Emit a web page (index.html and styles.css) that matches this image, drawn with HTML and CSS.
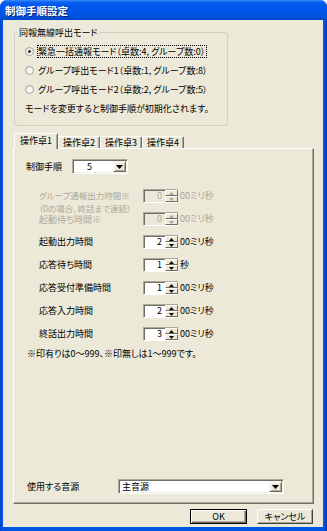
FILE: index.html
```html
<!DOCTYPE html>
<html lang="ja">

<head>
    <meta charset="UTF-8">
    <title>制御手順設定</title>
    <link rel="stylesheet" href="styles.css">
</head>

<body>
    <div class="window">
        <div class="titlebar">
            <span class="title">制御手順設定</span>
        </div>

        <div class="client">
            <!-- mode group -->
            <fieldset class="group">
                <legend>同報無線呼出モード</legend>
                <div class="radio-row first">
                    <span class="radio checked"></span>
                    <span class="radio-text focus">緊急一括通報モード（卓数:4, グループ数:0）</span>
                </div>
                <div class="radio-row">
                    <span class="radio"></span>
                    <span class="radio-text">グループ呼出モード1（卓数:1, グループ数:8）</span>
                </div>
                <div class="radio-row">
                    <span class="radio"></span>
                    <span class="radio-text">グループ呼出モード2（卓数:2, グループ数:5）</span>
                </div>
                <p class="group-note">モードを変更すると制御手順が初期化されます。</p>
            </fieldset>

            <!-- tabs -->
            <div class="tabs">
                <div class="tab active">操作卓1</div>
                <div class="tab">操作卓2</div>
                <div class="tab">操作卓3</div>
                <div class="tab">操作卓4</div>
            </div>

            <div class="tab-panel">
                <div class="proc-row">
                    <span class="proc-label">制御手順</span>
                    <div class="combo combo-small">
                        <span class="combo-value">5</span>
                        <span class="combo-btn">
                            <svg width="7" height="4" viewBox="0 0 7 4"><path d="M0 0h7L3.5 4z" /></svg>
                        </span>
                    </div>
                </div>

                <div class="time-list">
                    <div class="time-row disabled">
                        <span class="time-label two-line">グループ通報出力時間※<br>（0の場合、終話まで連続）</span>
                        <div class="spin">
                            <span class="spin-edit">0</span>
                            <span class="spin-btns">
                                <span class="spin-up"><svg width="5" height="3" viewBox="0 0 5 3"><path d="M0 3h5L2.5 0z" /></svg></span>
                                <span class="spin-down"><svg width="5" height="3" viewBox="0 0 5 3"><path d="M0 0h5L2.5 3z" /></svg></span>
                            </span>
                        </div>
                        <span class="unit">00ミリ秒</span>
                    </div>
                    <div class="time-row disabled after-two-line">
                        <span class="time-label">起動待ち時間※</span>
                        <div class="spin">
                            <span class="spin-edit">0</span>
                            <span class="spin-btns">
                                <span class="spin-up"><svg width="5" height="3" viewBox="0 0 5 3"><path d="M0 3h5L2.5 0z" /></svg></span>
                                <span class="spin-down"><svg width="5" height="3" viewBox="0 0 5 3"><path d="M0 0h5L2.5 3z" /></svg></span>
                            </span>
                        </div>
                        <span class="unit">00ミリ秒</span>
                    </div>
                    <div class="time-row">
                        <span class="time-label">起動出力時間</span>
                        <div class="spin">
                            <span class="spin-edit">2</span>
                            <span class="spin-btns">
                                <span class="spin-up"><svg width="5" height="3" viewBox="0 0 5 3"><path d="M0 3h5L2.5 0z" /></svg></span>
                                <span class="spin-down"><svg width="5" height="3" viewBox="0 0 5 3"><path d="M0 0h5L2.5 3z" /></svg></span>
                            </span>
                        </div>
                        <span class="unit">00ミリ秒</span>
                    </div>
                    <div class="time-row">
                        <span class="time-label">応答待ち時間</span>
                        <div class="spin">
                            <span class="spin-edit">1</span>
                            <span class="spin-btns">
                                <span class="spin-up"><svg width="5" height="3" viewBox="0 0 5 3"><path d="M0 3h5L2.5 0z" /></svg></span>
                                <span class="spin-down"><svg width="5" height="3" viewBox="0 0 5 3"><path d="M0 0h5L2.5 3z" /></svg></span>
                            </span>
                        </div>
                        <span class="unit">秒</span>
                    </div>
                    <div class="time-row">
                        <span class="time-label">応答受付準備時間</span>
                        <div class="spin">
                            <span class="spin-edit">1</span>
                            <span class="spin-btns">
                                <span class="spin-up"><svg width="5" height="3" viewBox="0 0 5 3"><path d="M0 3h5L2.5 0z" /></svg></span>
                                <span class="spin-down"><svg width="5" height="3" viewBox="0 0 5 3"><path d="M0 0h5L2.5 3z" /></svg></span>
                            </span>
                        </div>
                        <span class="unit">00ミリ秒</span>
                    </div>
                    <div class="time-row">
                        <span class="time-label">応答入力時間</span>
                        <div class="spin">
                            <span class="spin-edit">2</span>
                            <span class="spin-btns">
                                <span class="spin-up"><svg width="5" height="3" viewBox="0 0 5 3"><path d="M0 3h5L2.5 0z" /></svg></span>
                                <span class="spin-down"><svg width="5" height="3" viewBox="0 0 5 3"><path d="M0 0h5L2.5 3z" /></svg></span>
                            </span>
                        </div>
                        <span class="unit">00ミリ秒</span>
                    </div>
                    <div class="time-row">
                        <span class="time-label">終話出力時間</span>
                        <div class="spin">
                            <span class="spin-edit">3</span>
                            <span class="spin-btns">
                                <span class="spin-up"><svg width="5" height="3" viewBox="0 0 5 3"><path d="M0 3h5L2.5 0z" /></svg></span>
                                <span class="spin-down"><svg width="5" height="3" viewBox="0 0 5 3"><path d="M0 0h5L2.5 3z" /></svg></span>
                            </span>
                        </div>
                        <span class="unit">00ミリ秒</span>
                    </div>
                </div>

                <p class="range-note">※印有りは0～999、※印無しは1～999です。</p>

                <div class="source-row">
                    <span class="source-label">使用する音源</span>
                    <div class="combo combo-wide">
                        <span class="combo-value">主音源</span>
                        <span class="combo-btn">
                            <svg width="7" height="4" viewBox="0 0 7 4"><path d="M0 0h7L3.5 4z" /></svg>
                        </span>
                    </div>
                </div>
            </div>

            <div class="buttons">
                <button class="btn default">OK</button>
                <button class="btn">キャンセル</button>
            </div>
        </div>
    </div>
</body>

</html>
```

FILE: styles.css
```css
* {
    box-sizing: border-box;
}

html,
body {
    margin: 0;
    padding: 0;
    background: #ffffff;
}

body {
    width: 327px;
    height: 531px;
    font-family: "Noto Sans CJK JP", sans-serif;
    font-size: 9px;
    line-height: 11px;
    font-feature-settings: "palt";
    color: #000;
}

.window {
    width: 327px;
    height: 531px;
    display: flex;
    flex-direction: column;
    background: linear-gradient(90deg, #0042c8, #0055e5 2px, #0055e5 calc(100% - 2px), #0031a8);
    border-radius: 7px 7px 0 0;
    overflow: hidden;
}

.titlebar {
    height: 20px;
    flex: none;
    display: flex;
    align-items: center;
    padding: 1px 0 0 5px;
    background: linear-gradient(#3d8ef8 0, #0a63f0 2px, #0058ee 5px, #0055e5 12px, #0052dc 17px, #0045c4 20px);
}

.title {
    color: #fff;
    font-weight: bold;
    font-size: 10.5px;
    text-shadow: 1px 1px 0 #0a1c7a;
    font-feature-settings: normal;
}

.client {
    flex: 1;
    margin: 0 4px 4px 3px;
    background: #ece9d8;
    display: flex;
    flex-direction: column;
    padding: 7px 9px 3px 10px;
}

/* mode group */
.group {
    width: 214px;
    margin: 0 0 0 1px;
    padding: 4px 0 8px 10px;
    border: 1px solid #d0d0bf;
    border-radius: 3px;
}

.group legend {
    margin-left: -8px;
    padding: 0 2px;
}

.radio-row {
    height: 19px;
    display: flex;
    align-items: center;
}

.radio {
    width: 9px;
    height: 9px;
    flex: none;
    border-radius: 50%;
    border: 1px solid #a4a49a;
    background: radial-gradient(circle at 65% 65%, #ffffff, #e4e2da);
    margin-right: 3px;
    display: flex;
    align-items: center;
    justify-content: center;
}

.radio.checked::after {
    content: "";
    width: 3px;
    height: 3px;
    border-radius: 50%;
    background: #2b2b2b;
}

.radio-text {
    border: 1px solid transparent;
    padding: 0 1px 0 0;
    white-space: nowrap;
}

.radio-text.focus {
    border: 1px dotted #000;
}

.group-note {
    margin: 0;
    height: 18px;
    display: flex;
    align-items: center;
}

/* tabs */
.tabs {
    margin-top: 7px;
    height: 15px;
    display: flex;
    align-items: flex-end;
    padding-left: 1px;
}

.tab {
    height: 12px;
    width: 42px;
    border-top: 1px solid #fff;
    border-left: 1px solid #fff;
    border-right: 1px solid #716f64;
    border-radius: 2px 2px 0 0;
    box-shadow: inset -1px 0 0 #aca899;
    display: flex;
    align-items: center;
    justify-content: center;
    line-height: 10px;
}

.tab.active {
    width: 44px;
    height: 16px;
    margin-bottom: -1px;
    background: #ece9d8;
    position: relative;
    z-index: 1;
    padding-bottom: 1px;
}

.tab-panel {
    flex: 1;
    display: flex;
    flex-direction: column;
    border-top: 1px solid #fff;
    border-left: 1px solid #fff;
    border-right: 1px solid #716f64;
    border-bottom: 1px solid #716f64;
    box-shadow: inset -1px -1px 0 #aca899;
    padding: 10px 0 9px 12px;
}

.proc-row {
    height: 15px;
    display: flex;
    align-items: center;
}

.proc-label {
    width: 46px;
}

/* combo box */
.combo {
    height: 15px;
    display: flex;
    align-items: stretch;
    background: #fff;
    border-top: 1px solid #aca899;
    border-left: 1px solid #aca899;
    border-right: 1px solid #fff;
    border-bottom: 1px solid #fff;
    box-shadow: inset 1px 1px 0 #716f64, inset -1px -1px 0 #f1efe2;
    padding: 1px;
}

.combo-small {
    width: 56px;
}

.combo-wide {
    width: 166px;
}

.combo-value {
    flex: 1;
    display: flex;
    align-items: center;
    padding-left: 2px;
}

.combo-small .combo-value {
    padding-left: 13px;
}

.combo-btn {
    width: 13px;
    background: #ece9d8;
    border-top: 1px solid #f1efe2;
    border-left: 1px solid #f1efe2;
    border-right: 1px solid #716f64;
    border-bottom: 1px solid #716f64;
    box-shadow: inset 1px 1px 0 #fff, inset -1px -1px 0 #aca899;
    display: flex;
    align-items: center;
    justify-content: center;
}

.combo-btn svg {
    fill: #000;
}

/* time rows */
.time-list {
    margin-top: 15px;
    padding-left: 13px;
    display: flex;
    flex-direction: column;
    gap: 9px;
}

.time-row {
    height: 14px;
    display: flex;
    align-items: flex-start;
}

.time-label {
    width: 104px;
    flex: none;
    line-height: 10px;
    padding-top: 2px;
    white-space: nowrap;
}

.time-label.two-line {
    font-size: 8.5px;
    line-height: 12.5px;
    padding-top: 0;
}

.after-two-line .time-label {
    padding-top: 3px;
}

.spin {
    height: 14px;
    display: flex;
}

.spin-edit {
    width: 22px;
    background: #fff;
    border-top: 1px solid #aca899;
    border-left: 1px solid #aca899;
    border-bottom: 1px solid #fff;
    box-shadow: inset 1px 1px 0 #716f64;
    display: flex;
    align-items: center;
    justify-content: flex-end;
    padding-right: 3px;
    line-height: 10px;
}

.spin-btns {
    width: 13px;
    display: flex;
    flex-direction: column;
    border-top: 1px solid #aca899;
    border-bottom: 1px solid #fff;
}

.spin-up,
.spin-down {
    flex: 1;
    display: flex;
    align-items: center;
    justify-content: center;
    background: #ece9d8;
    border-top: 1px solid #fff;
    border-left: 1px solid #fff;
    border-right: 1px solid #716f64;
    border-bottom: 1px solid #716f64;
}

.spin-btns svg {
    fill: #000;
}

.unit {
    margin-left: 2px;
    line-height: 14px;
}

.disabled .time-label,
.disabled .unit,
.disabled .spin-edit {
    color: #aca899;
}

.disabled .spin-edit {
    background: #ece9d8;
}

.disabled .spin-btns svg {
    fill: #aca899;
}

.range-note {
    margin: 7px 0 0 1px;
}

.source-row {
    margin-top: auto;
    height: 15px;
    display: flex;
    align-items: center;
}

.source-label {
    width: 91px;
    margin-left: 1px;
}

/* dialog buttons */
.buttons {
    margin-top: 5px;
    display: flex;
    justify-content: flex-end;
    gap: 10px;
    padding-right: 1px;
}

.btn {
    height: 15px;
    width: 56px;
    padding: 0;
    font: inherit;
    font-size: 9px;
    line-height: 11px;
    color: #000;
    background: #ece9d8;
    border-top: 1px solid #fff;
    border-left: 1px solid #fff;
    border-right: 1px solid #404040;
    border-bottom: 1px solid #404040;
    box-shadow: inset -1px -1px 0 #aca899;
}

.btn.default {
    width: 57px;
    border: 1px solid #000;
    box-shadow: inset 1px 1px 0 #fff, inset -1px -1px 0 #716f64, inset -2px -2px 0 #aca899;
}
```
